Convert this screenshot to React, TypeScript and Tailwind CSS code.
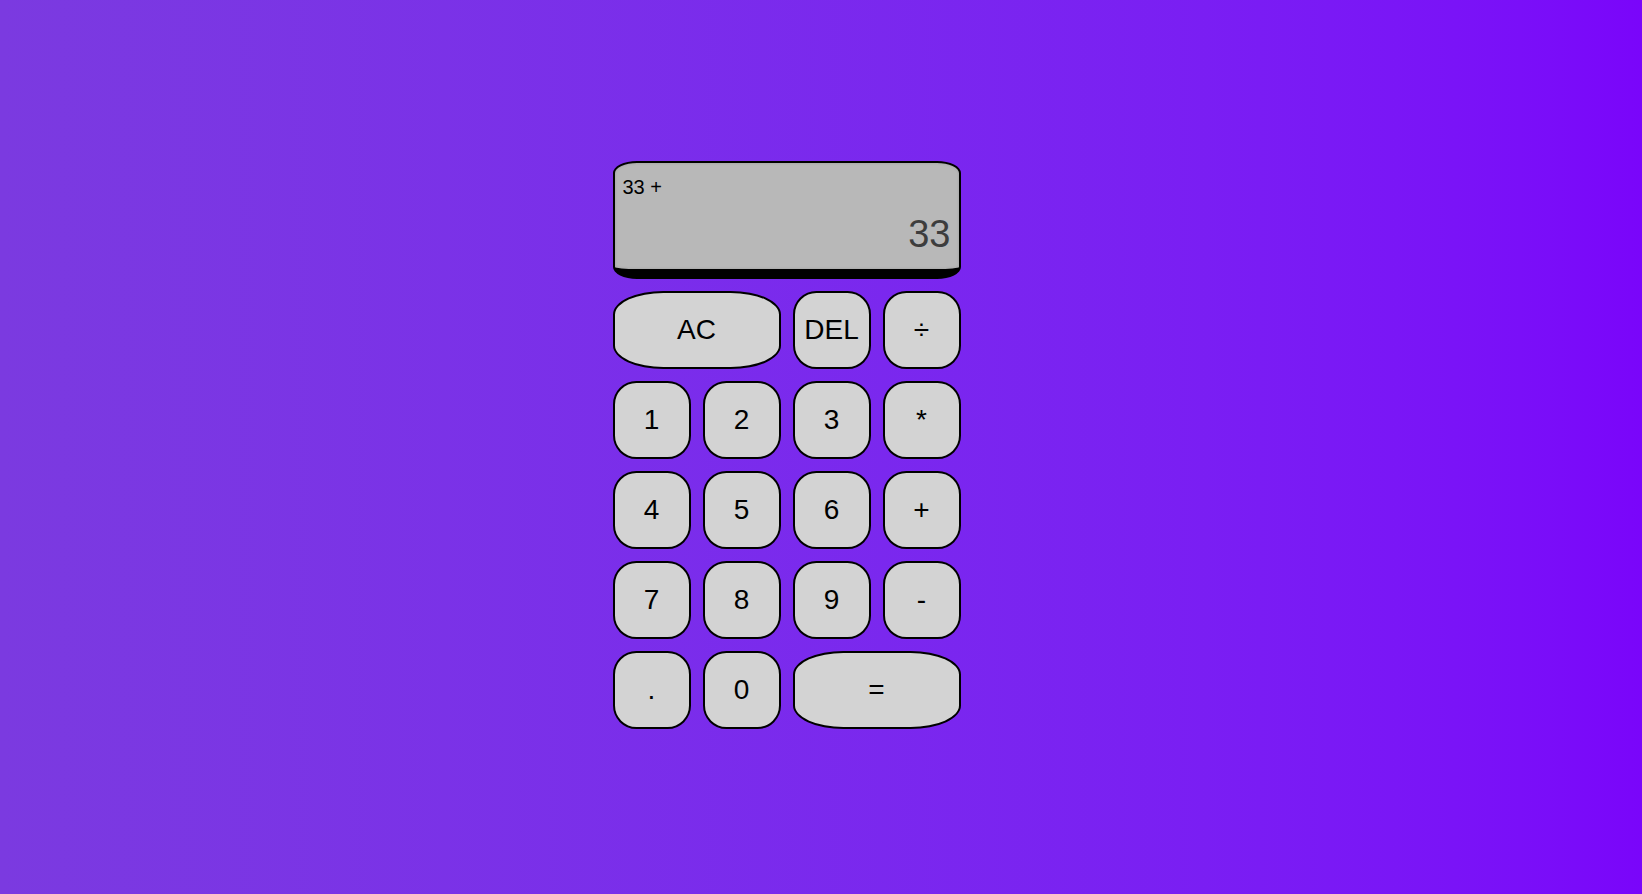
const keys = [
  { label: 'AC', wide: true },
  { label: 'DEL' },
  { label: '÷' },
  { label: '1' },
  { label: '2' },
  { label: '3' },
  { label: '*' },
  { label: '4' },
  { label: '5' },
  { label: '6' },
  { label: '+' },
  { label: '7' },
  { label: '8' },
  { label: '9' },
  { label: '-' },
  { label: '.' },
  { label: '0' },
  { label: '=', wide: true },
];

export default function App() {
  return (
    <div className="min-h-screen w-full bg-linear-to-r from-[#7b3ae0] to-[#7a05fa] flex items-center justify-center pr-[69px] pb-[4px] font-['Liberation_Sans',Arial,sans-serif]">
      <div className="grid grid-cols-[repeat(4,78px)] grid-rows-[118px_repeat(5,78px)] gap-[12px]">
        <div className="col-span-4 bg-[#b8b8b8] border-2 border-b-[10px] border-black rounded-[24px/12px] shadow-[inset_0_0_3px_rgba(0,0,0,0.15)] flex flex-col justify-between pt-[13px] pb-[13px] px-2">
          <div className="text-[20px] leading-[23px] text-black self-start">33 +</div>
          <div className="text-[38px] leading-[44px] text-[#3d3d3d] self-end">33</div>
        </div>
        {keys.map((k) => (
          <button
            key={k.label}
            className={`${k.wide ? 'col-span-2' : ''} bg-[#d3d3d3] border-2 border-black rounded-[30%] text-[28px] text-black flex items-center justify-center`}
          >
            {k.label}
          </button>
        ))}
      </div>
    </div>
  );
}
